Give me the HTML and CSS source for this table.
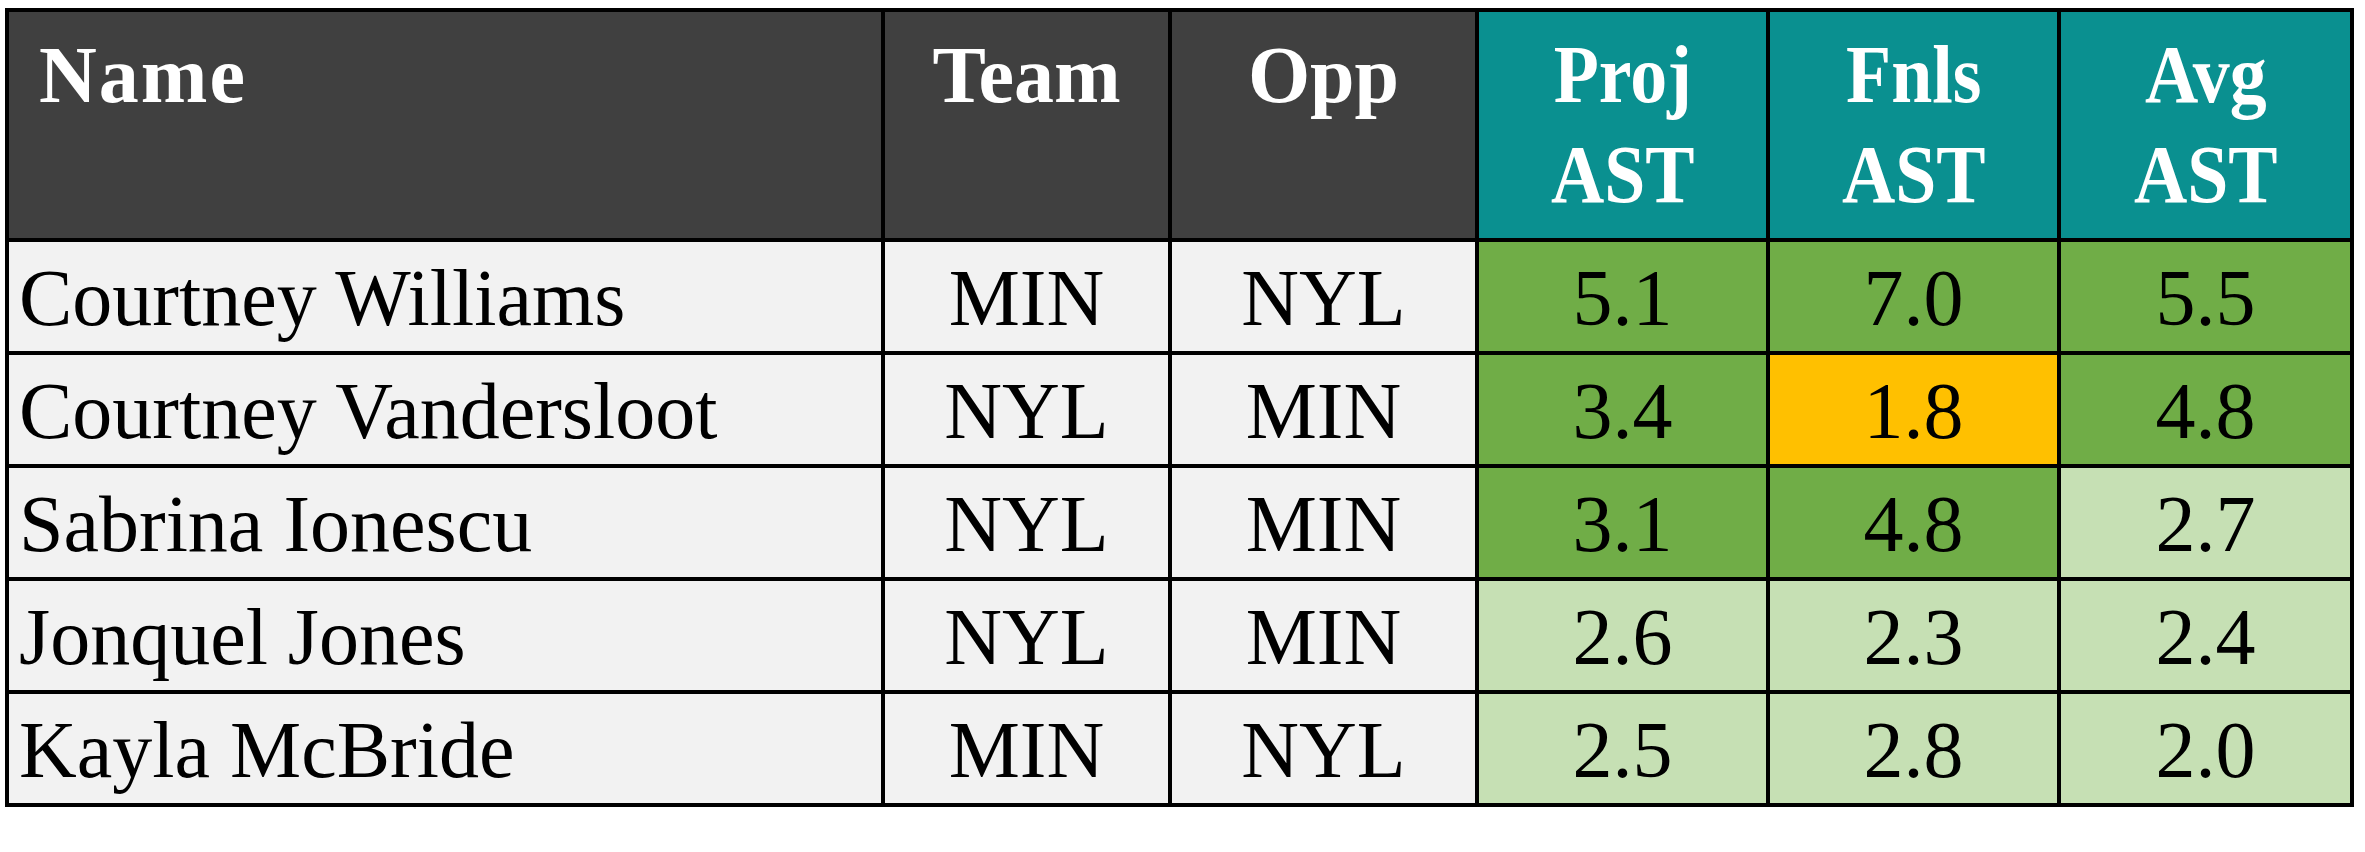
FILE: index.html
```html
<!DOCTYPE html>
<html lang="en">
<head>
<meta charset="utf-8">
<title>AST table</title>
<link rel="stylesheet" href="styles.css">
</head>
<body>
<div class="sheet">
  <div class="cell hd dark left">Name</div>
  <div class="cell hd dark">Team</div>
  <div class="cell hd dark">Opp</div>
  <div class="cell hd teal"><span class="narrow">Proj<br>AST</span></div>
  <div class="cell hd teal"><span class="narrow">Fnls<br>AST</span></div>
  <div class="cell hd teal"><span class="narrow">Avg<br>AST</span></div>

  <div class="cell body gray left">Courtney Williams</div>
  <div class="cell body gray">MIN</div>
  <div class="cell body gray">NYL</div>
  <div class="cell body green">5.1</div>
  <div class="cell body green">7.0</div>
  <div class="cell body green">5.5</div>

  <div class="cell body gray left">Courtney Vandersloot</div>
  <div class="cell body gray">NYL</div>
  <div class="cell body gray">MIN</div>
  <div class="cell body green">3.4</div>
  <div class="cell body orange">1.8</div>
  <div class="cell body green">4.8</div>

  <div class="cell body gray left">Sabrina Ionescu</div>
  <div class="cell body gray">NYL</div>
  <div class="cell body gray">MIN</div>
  <div class="cell body green">3.1</div>
  <div class="cell body green">4.8</div>
  <div class="cell body pale">2.7</div>

  <div class="cell body gray left">Jonquel Jones</div>
  <div class="cell body gray">NYL</div>
  <div class="cell body gray">MIN</div>
  <div class="cell body pale">2.6</div>
  <div class="cell body pale">2.3</div>
  <div class="cell body pale">2.4</div>

  <div class="cell body gray left">Kayla McBride</div>
  <div class="cell body gray">MIN</div>
  <div class="cell body gray">NYL</div>
  <div class="cell body pale">2.5</div>
  <div class="cell body pale">2.8</div>
  <div class="cell body pale">2.0</div>
</div>
</body>
</html>
```

FILE: styles.css
```css
html, body {
  background: #ffffff;
}
body {
  margin: 8px 0 0 5px;
  font-family: "Liberation Serif", "Times New Roman", serif;
}
.sheet {
  display: grid;
  grid-template-columns: 872px 283px 303px 287px 287px 289px;
  grid-template-rows: 226px repeat(5, 109px);
  gap: 4px;
  padding: 4px;
  background: #000000;
  width: max-content;
}
.cell {
  text-align: center;
  white-space: nowrap;
  overflow: hidden;
}
.cell.left {
  text-align: left;
}
.hd {
  color: #ffffff;
  font-weight: bold;
  font-size: 80px;
  line-height: 100px;
  padding-top: 13px;
}
.hd.left {
  padding-left: 30px;
  letter-spacing: 2px;
}
.dark {
  background: #404040;
}
.teal {
  background: #0a9090;
}
.narrow {
  display: inline-block;
  transform: scaleX(0.9);
  font-size: 82px;
}
.body {
  color: #000000;
  font-size: 80px;
  line-height: 109px;
  padding-top: 2px;
}
.body.left {
  padding-left: 10px;
}
.gray {
  background: #f2f2f2;
}
.green {
  background: #70ad47;
}
.pale {
  background: #c6e0b4;
}
.orange {
  background: #ffc000;
}
```
